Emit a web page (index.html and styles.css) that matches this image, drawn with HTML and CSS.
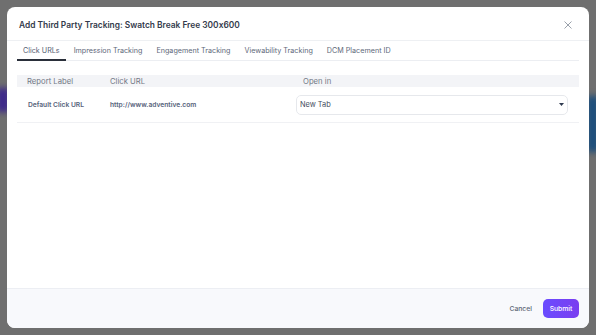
FILE: index.html
```html
<!DOCTYPE html>
<html>
<head>
<meta charset="utf-8">
<link rel="stylesheet" href="styles.css">
</head>
<body>
<div class="blob blob-left"></div>
<div class="blob blob-right"></div>
<div class="modal">
  <div class="modal-header">
    <h1 class="title">Add Third Party Tracking: Swatch Break Free 300x600</h1>
    <svg class="close" width="8" height="8" viewBox="0 0 8 8"><path d="M0.5 0.5 L7.5 7.5 M7.5 0.5 L0.5 7.5" stroke="#9aa1ab" stroke-width="1" fill="none"/></svg>
  </div>
  <div class="modal-body">
    <div class="tabs">
      <div class="tab active">Click URLs</div>
      <div class="tab">Impression Tracking</div>
      <div class="tab">Engagement Tracking</div>
      <div class="tab">Viewability Tracking</div>
      <div class="tab">DCM Placement ID</div>
    </div>
    <div class="table">
      <div class="thead">
        <div class="c1">Report Label</div>
        <div class="c2">Click URL</div>
        <div class="c3">Open in</div>
      </div>
      <div class="trow">
        <div class="c1 strong">Default Click URL</div>
        <div class="c2 strong">http://www.adventive.com</div>
        <div class="c3 cell-select">
          <div class="select">
            <span>New Tab</span>
            <svg width="5" height="3" viewBox="0 0 5 3"><path d="M0 0 L5 0 L2.5 3 Z" fill="#2f3a4f"/></svg>
          </div>
        </div>
      </div>
    </div>
  </div>
  <div class="modal-footer">
    <button class="btn-cancel">Cancel</button>
    <button class="btn-submit">Submit</button>
  </div>
</div>
</body>
</html>
```
FILE: styles.css
```css
* { box-sizing: border-box; }
html, body { margin: 0; padding: 0; }
body {
  width: 596px;
  height: 335px;
  background: #6f6f6f;
  padding: 7px;
  font-family: Inter, "Noto Sans", sans-serif;
  font-feature-settings: "calt" 0;
  position: relative;
  overflow: hidden;
}
.blob { position: absolute; filter: blur(3px); }
.blob-left { left: -4px; top: 88px; width: 14px; height: 24px; background: #3d2a8a; }
.blob-right { right: -4px; top: 96px; width: 14px; height: 56px; background: #1e4f7c; }
.modal {
  position: relative;
  width: 582px;
  height: 321px;
  background: #fff;
  border-radius: 8px;
  display: flex;
  flex-direction: column;
  overflow: hidden;
}
.modal-header {
  height: 34px;
  display: flex;
  align-items: center;
  justify-content: space-between;
  padding: 2px 17px 0 12px;
  border-bottom: 1px solid #eef0f3;
}
.title {
  margin: 0;
  font-size: 8.4px;
  font-weight: 600;
  color: #333a4b;
}
.close { display: block; }
.modal-body { flex: 1; padding: 0 10px; }
.tabs {
  display: flex;
  gap: 2px;
  border-bottom: 1px solid #eceef2;
  height: 20px;
}
.tab {
  padding: 5px 6px 0;
  font-size: 7.2px;
  color: #5e6879;
  height: 20px;
}
.tab.active {
  border-bottom: 2px solid #2a2f3a;
  color: #566174;
}
.table { margin-top: 14px; }
.thead {
  display: flex;
  background: #f3f4f7;
  height: 12px;
  align-items: center;
  font-size: 7.7px;
  color: #727886;
}
.thead .c1 { width: 83px; padding-left: 10px; }
.thead .c2 { width: 193px; padding-left: 10px; }
.thead .c3 { flex: 1; padding-left: 10px; }
.trow {
  display: flex;
  align-items: center;
  height: 36px;
  border-bottom: 1px solid #f0f1f4;
}
.trow .c1 { width: 83px; padding-left: 11px; }
.trow .c2 { width: 193px; padding-left: 10px; }
.trow .c3 { flex: 1; padding: 0 11px 0 3px; }
.strong { font-size: 6.7px; font-weight: 600; color: #56627a; }
.select {
  height: 20px;
  border: 1px solid #e6e8ec;
  border-radius: 5px;
  display: flex;
  align-items: center;
  justify-content: space-between;
  padding: 0 3px 0 3px;
  font-size: 7.4px;
  color: #454e5e;
}
.select svg { display: block; }
.modal-footer {
  height: 40px;
  background: #f8f9fc;
  border-top: 1px solid #eceef3;
  display: flex;
  align-items: center;
  justify-content: flex-end;
  padding: 0 10px 0 0;
  gap: 11px;
}
button { font-family: inherit; border: none; cursor: pointer; font-feature-settings: "calt" 0; }
.btn-cancel {
  background: none;
  padding: 0;
  font-size: 6.8px;
  font-weight: 500;
  color: #5e6676;
}
.btn-submit {
  width: 36px;
  height: 19px;
  border-radius: 5px;
  background: linear-gradient(90deg, #6a4cff, #7a3df0);
  color: #fff;
  font-size: 6.8px;
  font-weight: 500;
  padding: 0;
}
```
